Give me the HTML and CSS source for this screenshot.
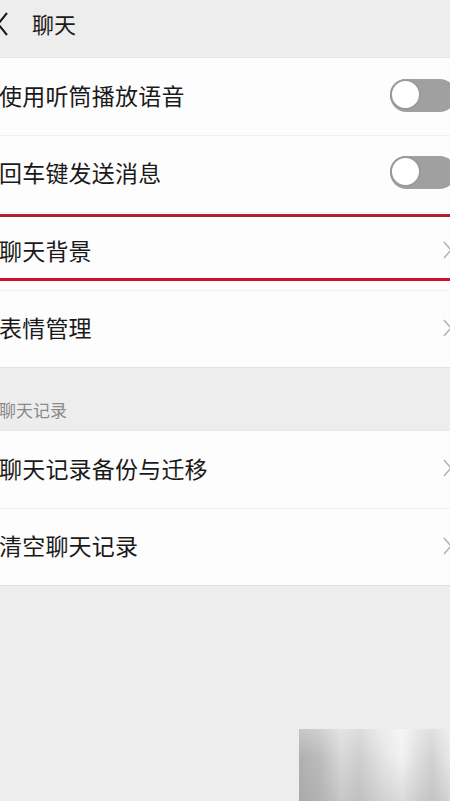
FILE: index.html
```html
<!DOCTYPE html>
<html lang="zh-CN">
<head>
  <meta charset="UTF-8">
  <meta name="viewport" content="width=device-width, initial-scale=1">
  <title>聊天</title>
  <link rel="stylesheet" href="styles.css">
</head>
<body>

<div class="topbar">
  <svg class="back" width="14" height="26" viewBox="0 0 14 26">
    <path d="M10 2 L1 13 L10 24" fill="none" stroke="#1a1a1a" stroke-width="2"/>
  </svg>
  <span class="title">聊天</span>
</div>

<div class="group">
  <div class="cell">
    <span class="label">使用听筒播放语音</span>
    <span class="switch"></span>
  </div>
  <div class="cell">
    <span class="label">回车键发送消息</span>
    <span class="switch"></span>
  </div>
  <div class="cell marked">
    <span class="label">聊天背景</span>
    <svg class="arrow" width="10" height="18" viewBox="0 0 10 18"><path d="M1 1 L8 9 L1 17" fill="none" stroke="#b3b3b3" stroke-width="1.6"/></svg>
  </div>
  <div class="cell">
    <span class="label">表情管理</span>
    <svg class="arrow" width="10" height="18" viewBox="0 0 10 18"><path d="M1 1 L8 9 L1 17" fill="none" stroke="#b3b3b3" stroke-width="1.6"/></svg>
  </div>
</div>

<div class="section-title">聊天记录</div>

<div class="group">
  <div class="cell">
    <span class="label">聊天记录备份与迁移</span>
    <svg class="arrow" width="10" height="18" viewBox="0 0 10 18"><path d="M1 1 L8 9 L1 17" fill="none" stroke="#b3b3b3" stroke-width="1.6"/></svg>
  </div>
  <div class="cell">
    <span class="label">清空聊天记录</span>
    <svg class="arrow" width="10" height="18" viewBox="0 0 10 18"><path d="M1 1 L8 9 L1 17" fill="none" stroke="#b3b3b3" stroke-width="1.6"/></svg>
  </div>
</div>

<div class="mosaic"></div>

</body>
</html>
```

FILE: styles.css
```css
html, body {
  margin: 0;
  padding: 0;
  height: 100%;
  overflow: hidden;
  background: #ededed;
  font-family: "Noto Sans CJK SC", "Noto Sans", sans-serif;
  color: #1a1a1a;
}
.topbar {
  height: 57px;
  display: flex;
  align-items: center;
  background: #ededed;
}
.back {
  margin-left: -3px;
  margin-top: -10px;
}
.title {
  margin-left: 21px;
  margin-top: -12px;
  font-size: 22px;
  line-height: 1;
}
.group {
  background: #fdfdfd;
  border-top: 1px solid #e6e6e6;
  border-bottom: 1px solid #e0e0e0;
}
.cell {
  height: 76.5px;
  display: flex;
  align-items: center;
  justify-content: space-between;
  border-bottom: 1px solid #f1f1f1;
}
.cell:last-child {
  border-bottom: none;
}
.label {
  margin-left: -1px;
  margin-top: -2px;
  font-size: 23px;
  line-height: 1;
  letter-spacing: 0.2px;
}
.arrow {
  margin-right: -3px;
  margin-top: -2px;
}
.switch {
  position: relative;
  width: 66px;
  height: 33px;
  margin-right: -6px;
  margin-top: -2px;
  border-radius: 17px;
  background: #a0a0a0;
}
.switch::after {
  content: "";
  position: absolute;
  left: 0;
  top: 0;
  width: 27px;
  height: 27px;
  border: 2px solid #9a9a9a;
  border-radius: 50%;
  background: #fff;
}
.marked {
  position: relative;
}
.marked::before {
  content: "";
  position: absolute;
  left: 0;
  right: 0;
  top: 1px;
  height: 61px;
  border-top: 3px solid #b3202c;
  border-bottom: 3px solid #cf0f2b;
}
.section-title {
  height: 62px;
  box-sizing: border-box;
  padding-top: 33px;
  margin-left: -1px;
  font-size: 17px;
  line-height: 1;
  color: #8a8a8a;
}
.mosaic {
  position: absolute;
  left: 299px;
  top: 729px;
  width: 151px;
  height: 72px;
  background:
    linear-gradient(180deg, rgba(255,255,255,0.3) 0%, rgba(255,255,255,0) 40%, rgba(150,150,150,0.25) 100%),
    linear-gradient(90deg, #b0b0b0 0%, #bcbcbc 14%, #d8d8d8 28%, #cecece 40%, #e4e4e4 55%, #f2f2f2 68%, #e0e0e0 78%, #d2d2d2 88%, #e8e8e8 100%);
}
```
